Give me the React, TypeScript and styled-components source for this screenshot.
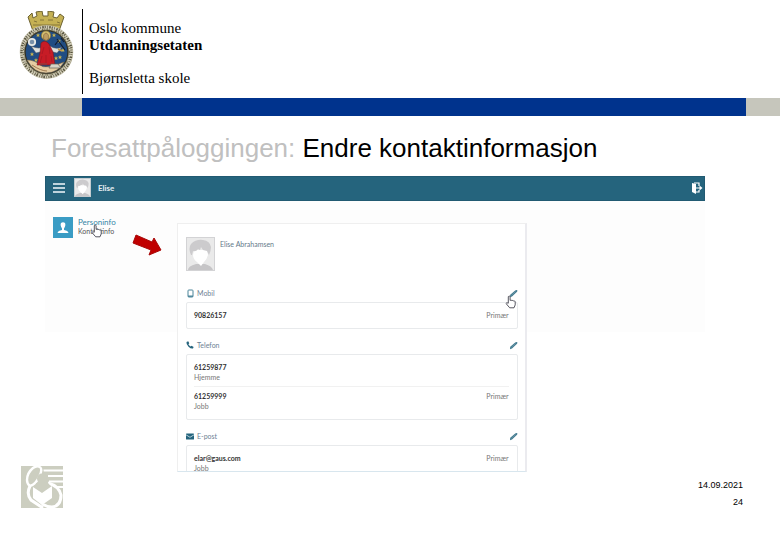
import React from "react";
import styled, { createGlobalStyle } from "styled-components";

const GlobalStyle = createGlobalStyle`
  *, *::before, *::after { box-sizing: border-box; }
  body {
    margin: 0;
    background: #fff;
    color: #000;
    font-family: "Liberation Sans", Arial, sans-serif;
  }
  h1, h2, p { margin: 0; font-weight: 400; }
`;

const teal = "#25647d";

const Slide = styled.div`
  min-height: 100vh;
  overflow: hidden;
`;

const Masthead = styled.header`
  display: flex;
  align-items: flex-start;
  padding: 9px 20px 4px 19px;
`;

const CrestHolder = styled.div`
  width: 63px;
  padding-top: 2px;
  line-height: 0;
`;

const Organisation = styled.div`
  padding: 11px 0 7px 6px;
  border-left: 1px solid #000;
  font: 15px/17px "Liberation Serif", "Times New Roman", serif;
`;

const Unit = styled.p<{ $strong?: boolean; $apart?: boolean }>`
  font-weight: ${(p) => (p.$strong ? 700 : 400)};
  margin-top: ${(p) => (p.$apart ? 16 : 0)}px;
`;

const Band = styled.div`
  height: 18px;
  padding: 0 34px 0 82px;
  background: #c6c6bc;
`;

const BandFill = styled.div`
  height: 100%;
  background: #00338d;
`;

const Title = styled.h1`
  padding: 17px 20px 13px 51px;
  font-size: 26px;
  line-height: 30px;
`;

const Muted = styled.span`
  color: #c0c0c0;
`;

const Portal = styled.main`
  position: relative;
  margin: 0 75px 0 45px;
  background: linear-gradient(#fdfdfd, #fdfdfd) 0 0 / 100% 156px no-repeat;
  font-family: Lato, "Open Sans", sans-serif;
  font-size: 7px;
  line-height: 10px;
`;

const TopBar = styled.div`
  display: flex;
  align-items: center;
  height: 25px;
  padding: 0 1px 2px 7px;
  background: ${teal};
  border: 1px solid #215a72;
  color: #fff;
`;

const UserName = styled.span`
  flex: 1;
  margin-left: 7px;
  font-size: 8px;
  font-weight: 700;
  color: #e6f0f4;
`;

const IconButton = styled.button`
  display: flex;
  padding: 0;
  border: 0;
  background: none;
  color: inherit;
  cursor: pointer;
`;

const MenuButton = styled(IconButton)`
  margin-right: 9px;
  color: #bfd3dc;
`;

const Workspace = styled.div`
  display: grid;
  grid-template-columns: 132px minmax(0, 349fr) minmax(0, 178fr);
`;

const SideNav = styled.nav`
  padding: 16px 0 0 8px;
`;

const NavLink = styled.a`
  display: flex;
  gap: 5px;
  color: #555;
  text-decoration: none;
  line-height: 9px;
`;

const NavTile = styled.span`
  display: flex;
  align-items: center;
  justify-content: center;
  width: 20px;
  height: 21px;
  background: #3a9cc4;
`;

const NavText = styled.span`
  display: flex;
  flex-direction: column;
  padding-top: 1px;
`;

const NavTitle = styled.span`
  font-size: 8px;
  color: #3585a5;
`;

const Card = styled.section`
  height: 249px;
  margin-top: 22px;
  padding: 13px 7px 0 8px;
  overflow: hidden;
  background: #fff;
  border: 1px solid #efefef;
  border-right: 2px solid #ebebef;
  border-bottom-color: #d8e6ee;
`;

const Profile = styled.div`
  display: flex;
  gap: 5px;
  height: 34px;
  margin-bottom: 15px;
  color: #65798a;
`;

const ProfileName = styled.h2`
  padding-top: 2px;
  font-size: 7px;
  line-height: 10px;
`;

const Group = styled.section`
  margin-bottom: 9px;
`;

const GroupHead = styled.div`
  display: flex;
  align-items: center;
  gap: 3px;
  height: 14px;
  margin-bottom: 2px;
  color: ${teal};
`;

const GroupTitle = styled.h2`
  flex: 1;
  font-size: 7px;
  line-height: 10px;
  color: #6e7f94;
`;

const Entries = styled.div`
  padding: 0 8px 0 7px;
  background: #fff;
  border: 1px solid #e8eaec;
  border-radius: 2px;
`;

const Entry = styled.div`
  display: flex;
  justify-content: space-between;
  padding: 7px 0 4px;
  color: #777;

  & + & {
    padding: 4px 0 8px;
    border-top: 1px solid #f1f1f1;
  }

  &:only-child {
    padding-bottom: 8px;
  }
`;

const Value = styled.p`
  font-weight: 700;
  color: #333;
`;

const ArrowMark = styled.svg`
  position: absolute;
  left: 87px;
  top: 57px;
`;

const Pointer = styled.svg<{ $right?: boolean }>`
  position: absolute;
  left: ${(p) => (p.$right ? "calc(100% - 200px)" : "46px")};
  top: ${(p) => (p.$right ? 119 : 48)}px;
`;

const Foot = styled.footer`
  display: flex;
  justify-content: space-between;
  margin-top: -6px;
  padding: 0 37px 0 21px;
  font-size: 9px;
  line-height: 17px;
  text-align: right;
`;

const FootText = styled.div`
  padding-top: 11px;
`;

const stars = [[15, 30], [13, 43], [40, 30], [44, 39], [19, 24], [35, 24], [17, 49], [37, 47], [41, 46]];

const Crest = () => (
  <svg width="55" height="69" viewBox="0 0 55 69" role="img" aria-label="Oslo kommune">
    <path
      d="M9 6l4-4 1 5 4-2-1-4 6-1 1 5 5 0 0-5 6 1-1 5 4 1 3-4 4 3-5 14H14z"
      fill="#c5b154"
      stroke="#6c6130"
      strokeWidth="1"
    />
    <path d="M15 10l3 1m3-2h4m4 0h5m4 2l3 1M14 14h27" stroke="#847538" strokeWidth="1" />
    <circle cx="27.5" cy="41" r="26.5" fill="#6d6950" />
    <circle cx="27.5" cy="41" r="24.6" fill="none" stroke="#d0ccb7" strokeWidth="4.4" />
    <circle cx="27.5" cy="41" r="25" fill="none" stroke="#55513c" strokeWidth="2.4" strokeDasharray="1 1.5 .6 1.6 1.5 1" />
    <circle cx="27.5" cy="41" r="23" fill="none" stroke="#767052" strokeWidth="1.4" strokeDasharray="1.4 1 .7 1.8" />
    <circle cx="27.5" cy="41" r="21.3" fill="#214d83" stroke="#312f22" strokeWidth="1" />
    {stars.map(([x, y]) => (
      <path key={`${x}-${y}`} d={`M${x} ${y - 2}l.6 1.4 1.4.1-1 1 .4 1.5-1.4-.8-1.4.8.4-1.5-1-1 1.4-.1z`} fill="#c9b551" />
    ))}
    <path d="M8 49q8 0 13 5t24-3q-6 11-18 11T8 49z" fill="#e5cda3" stroke="#766243" strokeWidth=".6" />
    <path d="M13 54q9 6 15 6" stroke="#a17a50" strokeWidth="1" fill="none" />
    <path d="M12 35q9 4 13 0l6 0q6 4 12 1l-5 6-8-2-5 0-8 2z" fill="#dfe2df" stroke="#4a4e55" strokeWidth=".5" />
    <circle cx="13" cy="31" r="3.2" fill="#7890a9" stroke="#e6e8e5" strokeWidth="1.8" />
    <circle cx="27" cy="24.5" r="4.6" fill="#d8c274" stroke="#8f742f" strokeWidth=".8" />
    <path d="M24.6 24q2.4-4 4.8 0v4q-2 3-4.8 0z" fill="#bf9d61" stroke="#6d5130" strokeWidth=".5" />
    <path d="M22 32q4-4 8 1l4 8 2 13H18l3-12z" fill="#c71c26" stroke="#7d1722" strokeWidth=".6" />
    <path d="M25 36l-2 7m7-7l1 7m-8 2l-2 7m6-8v8m5-7l1 6" stroke="#a11722" strokeWidth=".7" />
    <path d="M20 53h8m4 0h7l3 4H30z" stroke="#625d54" fill="#d8d4c7" strokeWidth=".7" />
    <path d="M38 28l8 11m-4-12l3 4m-6-1l-3 4" stroke="#121d32" strokeWidth="1.2" />
    <path d="M39 38l4 2" stroke="#c5984a" strokeWidth="1.5" />
  </svg>
);

const Portrait = ({ width, height }: { width: number; height: number }) => (
  <svg width={width} height={height} viewBox="0 0 29 34" preserveAspectRatio="none" aria-hidden="true">
    <rect x=".5" y=".5" width="28" height="33" fill="#eaeaea" stroke="#d3d3d5" />
    <path d="M2 33q0-4 8-6h9q7 2 8 6z" fill="#c6c5c7" />
    <path d="M8 13h13l1 5q-1 4-4 7l-3 4-4-4q-4-3-4-7z" fill="#fff" />
    <path d="M5 18Q2 11 5 7q5-5 12-4 7 1 8 7 0 4-2 8l-2-4-4-1-2-3-1 3-2-1q-2 3-5 2l-1 4z" fill="#cccbcd" />
  </svg>
);

const PencilIcon = () => (
  <svg width="9" height="9" viewBox="0 0 9 9" aria-hidden="true">
    <path d="M1.2 5.8L6.2 1.5q1.2-1 2-.2t-.4 1.8L3 7.5 1 8.2z" fill="#437b90" />
    <path d="M2.4 6.2l4.2-3.6" stroke="#7ba4b3" strokeWidth=".6" />
  </svg>
);

const MobileIcon = () => (
  <svg width="8" height="9" viewBox="0 0 8 9" aria-hidden="true">
    <rect x="2" y="1" width="5" height="7" rx=".8" fill="#fff" stroke="#4a8499" />
    <path d="M2 7.2h5" stroke="#4a8499" strokeWidth="1.4" />
  </svg>
);

const PhoneIcon = () => (
  <svg width="8" height="8" viewBox="0 0 8 8" aria-hidden="true">
    <path d="M.5 1L2.2.3l1.1 2-.9.9q.7 1.5 2.2 2.3l1-.8 2 1.2L7 7.5Q5 8 2.5 5.7T.5 1z" fill={teal} />
  </svg>
);

const MailIcon = () => (
  <svg width="8" height="7" viewBox="0 0 8 7" aria-hidden="true">
    <rect y=".5" width="8" height="6" rx=".6" fill={teal} />
    <path d="M0 1.8l4 2.5 4-2.5" fill="none" stroke="#c4dbe2" strokeWidth=".9" />
  </svg>
);

const HandPointer = ({ right }: { right?: boolean }) => (
  <Pointer $right={right} width="12" height="14" viewBox="0 0 12 14" aria-hidden="true">
    <path
      d="M3.3 8.2V1.6q.9-1.2 1.8 0v3.8q1-.8 1.8.2 1-.5 1.7.3 1.3-.3 1.6.9v3.1L9 12.8H4.7L1 8.5q.4-1.3 2.3-.3z"
      fill="#fff"
      stroke="#454550"
      strokeWidth=".9"
    />
  </Pointer>
);

const SchoolMark = () => (
  <svg width="43" height="43" viewBox="0 0 43 43" role="img" aria-label="Bjørnsletta skole">
    <path d="M0 0h42v42H0z" fill="#cccec0" />
    <path d="M22 4.5h21M27 10h16M28 15.5h15M32 21h11" stroke="#fff" strokeWidth="2" />
    <path d="M13 0h9l1 8-5 3-8 9-4-8q0-8 7-12z" fill="#cccec0" />
    <path
      d="M19 1Q16-1 12 2 6 7 6 14q0 4 3 6 6-2 9-9 4-7 1-10"
      fill="none"
      stroke="#fff"
      strokeWidth="2.4"
    />
    <path d="M9 20q-4 8 1 14l12 8" fill="none" stroke="#fff" strokeWidth="3" />
    <path d="M27 17q11 3 13 12 0 11-9 12-5 0-10-3" fill="#cccec0" stroke="#fff" strokeWidth="3" />
    <circle cx="21" cy="12.5" r="5" fill="#cccec0" />
    <path d="M15 17h12l7 8v8L21 38l-8-6z" fill="#cccec0" />
    <path d="M12 21l9 6 10-7v12l-10 7-9-7z" fill="#fff" />
  </svg>
);

type Contact = { value: string; kind?: string; primary?: boolean };
type ContactGroup = { title: string; icon: React.ReactNode; entries: Contact[] };

const groups: ContactGroup[] = [
  { title: "Mobil", icon: <MobileIcon />, entries: [{ value: "90826157", primary: true }] },
  {
    title: "Telefon",
    icon: <PhoneIcon />,
    entries: [
      { value: "61259877", kind: "Hjemme" },
      { value: "61259999", kind: "Jobb", primary: true },
    ],
  },
  { title: "E-post", icon: <MailIcon />, entries: [{ value: "elar@gaus.com", kind: "Jobb", primary: true }] },
];

export default function App() {
  return (
    <Slide>
      <GlobalStyle />
      <Masthead>
        <CrestHolder>
          <Crest />
        </CrestHolder>
        <Organisation>
          <Unit>Oslo kommune</Unit>
          <Unit $strong>Utdanningsetaten</Unit>
          <Unit $apart>Bjørnsletta skole</Unit>
        </Organisation>
      </Masthead>
      <Band>
        <BandFill />
      </Band>
      <Title>
        <Muted>Foresattpåloggingen:</Muted> Endre kontaktinformasjon
      </Title>
      <Portal>
        <TopBar>
          <MenuButton aria-label="Meny">
            <svg width="12" height="10" viewBox="0 0 12 10" aria-hidden="true">
              <path d="M0 1h12M0 5h12M0 9h12" stroke="currentColor" strokeWidth="2" />
            </svg>
          </MenuButton>
          <Portrait width={17} height={19} />
          <UserName>Elise</UserName>
          <IconButton aria-label="Logg ut">
            <svg width="12" height="12" viewBox="0 0 12 12" aria-hidden="true">
              <path d="M1 1l4 1v10L1 10z" fill="currentColor" />
              <path d="M3 1h5v3M8 8v2H5M5 6h5" fill="none" stroke="currentColor" strokeWidth="1.2" />
              <path d="M8.5 3.5L11.5 6l-3 2.5z" fill="currentColor" />
            </svg>
          </IconButton>
        </TopBar>
        <Workspace>
          <SideNav>
            <NavLink href="#personinfo">
              <NavTile>
                <svg width="12" height="12" viewBox="0 0 12 12" aria-hidden="true">
                  <path d="M4 1q2-1.5 4 0 .8 2-.2 4L7 6.5V8q4 .5 4.5 3H.5Q1 8.5 5 8V6.5L4.2 5Q3.2 3 4 1z" fill="#fff" />
                </svg>
              </NavTile>
              <NavText>
                <NavTitle>Personinfo</NavTitle>
                <span>Kontaktinfo</span>
              </NavText>
            </NavLink>
          </SideNav>
          <Card>
            <Profile>
              <Portrait width={29} height={34} />
              <ProfileName>Elise Abrahamsen</ProfileName>
            </Profile>
            {groups.map((group) => (
              <Group key={group.title}>
                <GroupHead>
                  {group.icon}
                  <GroupTitle>{group.title}</GroupTitle>
                  <IconButton aria-label={`Endre ${group.title}`}>
                    <PencilIcon />
                  </IconButton>
                </GroupHead>
                <Entries>
                  {group.entries.map((entry) => (
                    <Entry key={entry.value}>
                      <div>
                        <Value>{entry.value}</Value>
                        {entry.kind && <p>{entry.kind}</p>}
                      </div>
                      {entry.primary && <span>Primær</span>}
                    </Entry>
                  ))}
                </Entries>
              </Group>
            ))}
          </Card>
        </Workspace>
        <HandPointer />
        <HandPointer right />
        <ArrowMark width="32" height="24" viewBox="0 0 32 24" aria-hidden="true">
          <path d="M4 2l16 7 2-4 7 12-12 5 2-5L1 10z" fill="#c00000" stroke="#a80808" strokeWidth="1" />
        </ArrowMark>
      </Portal>
      <Foot>
        <SchoolMark />
        <FootText>
          <p>14.09.2021</p>
          <p>24</p>
        </FootText>
      </Foot>
    </Slide>
  );
}
